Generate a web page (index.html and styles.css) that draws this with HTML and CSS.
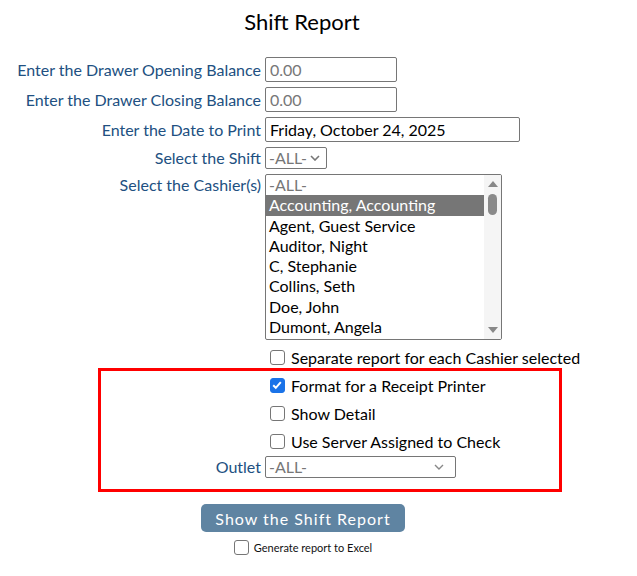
FILE: index.html
```html
<!DOCTYPE html>
<html>
<head>
<meta charset="utf-8">
<link rel="stylesheet" href="styles.css">
</head>
<body>
<div class="page">
  <h1 class="title">Shift Report</h1>
  <div class="form">
    <div class="label">Enter the Drawer Opening Balance</div>
    <div class="field"><div class="input w-bal muted">0.00</div></div>

    <div class="label">Enter the Drawer Closing Balance</div>
    <div class="field"><div class="input w-bal muted">0.00</div></div>

    <div class="label">Enter the Date to Print</div>
    <div class="field"><div class="input w-date">Friday, October 24, 2025</div></div>

    <div class="label">Select the Shift</div>
    <div class="field"><div class="select w-shift"><span class="muted">-ALL-</span><svg class="chev" viewBox="0 0 10 6" width="10" height="6"><path d="M1 1l4 4 4-4" fill="none" stroke="#777" stroke-width="1.6"/></svg></div></div>

    <div class="label top">Select the Cashier(s)</div>
    <div class="field">
      <div class="listbox">
        <div class="options">
          <div class="opt muted">-ALL-</div>
          <div class="opt sel">Accounting, Accounting</div>
          <div class="opt">Agent, Guest Service</div>
          <div class="opt">Auditor, Night</div>
          <div class="opt">C, Stephanie</div>
          <div class="opt">Collins, Seth</div>
          <div class="opt">Doe, John</div>
          <div class="opt">Dumont, Angela</div>
        </div>
        <div class="scrollbar">
          <svg class="arrow" viewBox="0 0 10 6" width="10" height="6"><path d="M0 6L5 0L10 6z" fill="#888"/></svg>
          <div class="thumb"></div>
          <div class="track"></div>
          <svg class="arrow" viewBox="0 0 10 6" width="10" height="6"><path d="M0 0L5 6L10 0z" fill="#888"/></svg>
        </div>
      </div>
    </div>

    <div></div>
    <div class="check-row first"><span class="box"></span><span>Separate report for each Cashier selected</span></div>

    <div></div>
    <div class="check-row"><span class="box checked"><svg viewBox="0 0 14 14" width="14" height="14"><path d="M3.2 7.2l2.6 2.6 5-5.6" fill="none" stroke="#fff" stroke-width="2"/></svg></span><span>Format for a Receipt Printer</span></div>

    <div></div>
    <div class="check-row"><span class="box"></span><span>Show Detail</span></div>

    <div></div>
    <div class="check-row"><span class="box"></span><span>Use Server Assigned to Check</span></div>

    <div class="label outlet">Outlet</div>
    <div class="field outlet"><div class="select w-outlet"><span class="muted">-ALL-</span><svg class="chev" viewBox="0 0 10 6" width="10" height="6"><path d="M1 1l4 4 4-4" fill="none" stroke="#888" stroke-width="1.4"/></svg></div></div>
  </div>

  <div class="actions">
    <button class="btn">Show the Shift Report</button>
    <div class="excel"><span class="box"></span><span>Generate report to Excel</span></div>
  </div>

  <div class="highlight"></div>
</div>
</body>
</html>
```

FILE: styles.css
```css
* { box-sizing: border-box; }
html, body { margin: 0; padding: 0; background: #fff; }
body { font-family: Lato, "Open Sans", sans-serif; font-size: 16px; color: #000; }

.page { position: relative; width: 604px; padding-top: 8px; }

.title {
  margin: 0;
  text-align: center;
  font-size: 22px;
  font-weight: normal;
  line-height: 28px;
  height: 49px;
}

.form {
  display: grid;
  grid-template-columns: 261px auto;
  column-gap: 4px;
  row-gap: 5px;
  align-items: center;
}

.label {
  text-align: right;
  color: #215081;
  white-space: nowrap;
  line-height: 20px;
}
.label.top { align-self: start; line-height: 22px; }

.field { display: flex; }

.muted { color: #777; }

.input {
  height: 25px;
  border: 1px solid #767676;
  border-radius: 2px;
  padding: 0 4px;
  line-height: 23px;
  white-space: nowrap;
}
.w-bal { width: 132px; }
.w-date { width: 255px; }

.select {
  height: 22px;
  border: 1px solid #767676;
  border-radius: 2px;
  padding: 0 6px 0 3px;
  line-height: 20px;
  display: flex;
  align-items: center;
  justify-content: space-between;
}
.w-shift { width: 62px; }
.w-outlet { width: 191px; padding-right: 11px; }
.chev { flex: none; }

.listbox {
  width: 237px;
  height: 166px;
  border: 1px solid #767676;
  border-radius: 2px;
  display: flex;
  overflow: hidden;
}
.options { flex: 1; padding-top: 0; }
.opt {
  height: 20.3px;
  line-height: 20px;
  padding-left: 3px;
  white-space: nowrap;
}
.opt.sel { background: #767676; color: #fff; }

.scrollbar {
  width: 17px;
  background: #f5f5f5;
  display: flex;
  flex-direction: column;
  align-items: center;
  padding: 6px 0 6px;
}
.arrow { flex: none; }
.thumb {
  width: 9px;
  height: 21px;
  margin-top: 7px;
  border-radius: 5px;
  background: #8a8a8a;
}
.track { flex: 1; }

.check-row {
  height: 28px;
  display: flex;
  align-items: center;
  padding-left: 5px;
  white-space: nowrap;
}
.check-row.first { margin-top: -2px; }

.form > .check-row, .form > div:empty { margin-bottom: -5px; }

.box {
  flex: none;
  width: 15px;
  height: 15px;
  border: 1px solid #767676;
  border-radius: 3px;
  background: #fff;
  margin-right: 6px;
  display: inline-flex;
}
.box.checked { background: #1a73e8; border-color: #1a73e8; }
.box.checked svg { margin: -1px; }

.outlet { margin-top: 1px; }

.actions {
  display: flex;
  flex-direction: column;
  align-items: center;
  padding-top: 26px;
  padding-left: 2px;
}
.btn {
  width: 204px;
  height: 28px;
  border: none;
  border-radius: 5px;
  background: #5f84a2;
  color: #fff;
  font-family: Lato, sans-serif;
  font-size: 16px;
  letter-spacing: 1px;
  padding: 0;
}
.excel {
  display: flex;
  align-items: center;
  margin-top: 8px;
  font-size: 11px;
  color: #111;
}
.excel .box { margin-right: 5px; }

.highlight {
  position: absolute;
  left: 98px;
  top: 368px;
  width: 464px;
  height: 124px;
  border: 3px solid #ff0000;
  pointer-events: none;
}
```
